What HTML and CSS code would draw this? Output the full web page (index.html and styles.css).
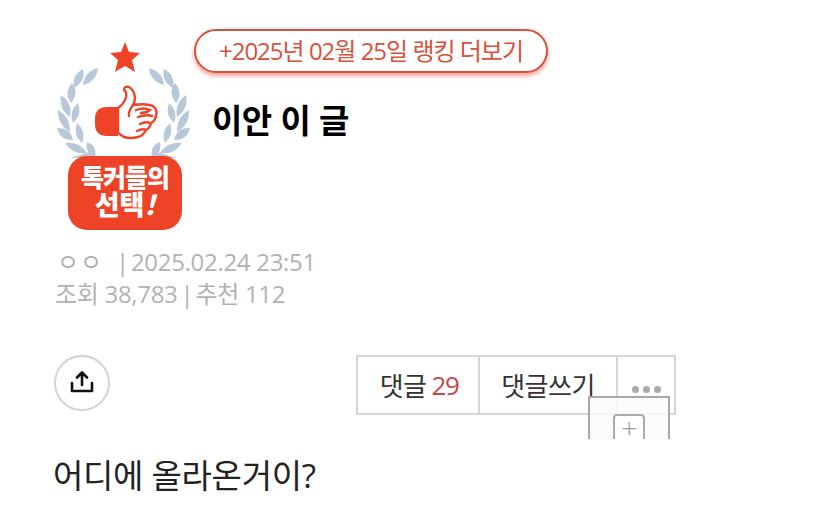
FILE: index.html
```html
<!DOCTYPE html>
<html lang="ko">
<head>
<meta charset="utf-8">
<title>이안 이 글</title>
<link rel="stylesheet" href="styles.css">
</head>
<body>
<main class="page">
  <a class="rank-pill">+2025년 02월 25일 랭킹 더보기</a>
  <header class="head">
    <svg class="badge" viewBox="50 36 146 200" width="146" height="200" aria-hidden="true">
      <polygon fill="#ee4327" points="125,42 129,52 140,53 132,60 135,72 125,66 115,72 118,60 110,53 121,52"/>
      <g id="laurel" fill="#b9c8d8">
        <path d="M98 68 Q96.4 81.7 83 85 Q84.6 71.3 98 68Z"/>
        <path d="M83 69 Q85.7 81.8 74 88 Q71.4 75.3 83 69Z"/>
        <path d="M72 83 Q79.5 93 71 103 Q63.5 93 72 83Z"/>
        <path d="M78 103 Q82.7 114.3 73 123 Q68.3 111.7 78 103Z"/>
        <path d="M61 95 Q72.7 103.4 70 117 Q58.3 108.6 61 95Z"/>
        <path d="M58 110 Q70.5 117.1 70 132 Q57.5 124.9 58 110Z"/>
        <path d="M77 123 Q86.7 131.7 82 143 Q72.3 134.3 77 123Z"/>
        <path d="M57 128 Q70.2 127.5 73 140 Q59.8 140.5 57 128Z"/>
        <path d="M65 143 Q79.25 140.85 87 153 Q72.75 155.15 65 143Z"/>
        <path d="M87 142 Q97.5 146.25 95 157 Q84.5 152.75 87 142Z"/>
        <path d="M70 158 L90 152 L100 158Z"/>
      </g>
      <use href="#laurel" transform="translate(247 0) scale(-1 1)"/>
      <path fill="#ee4327" d="M118 107 H107 Q95 107 95 119 V124 Q95 136 107 136 H118Z"/>
      <path fill="#fff" stroke="#ee4327" stroke-width="2.4" stroke-linejoin="round" d="M118 108 Q124 104 126 97 Q127 92 124 90 Q124 86 129 87 Q134 90 135 97 Q135 102 133 105 Q146 103 153 106 Q158 110 156 116 Q155 121 151 123 Q150 128 146 130 Q143 136 138 137 Q130 139 124 137 L118 133Z"/>
      <path fill="none" stroke="#ee4327" stroke-width="2.4" stroke-linecap="round" d="M133 105 Q128 112 129 116 M136 110 Q144 107 150 110 Q146 113 141 113 M138 117 Q146 114 152 116 M140 124 Q146 121 150 123 M137 131 Q142 128 146 130"/>
      <rect x="68" y="156" width="114" height="74" rx="19" fill="#ee4327"/>
      <text class="badge-text" x="125" y="187" text-anchor="middle">톡커들의</text>
      <text class="badge-text badge-text-big" x="125" y="215" text-anchor="middle">선택<tspan class="bang">!</tspan></text>
    </svg>
    <h1 class="title">이안 이 글</h1>
  </header>
  <section class="meta">
    <p class="meta-line"><span class="nick">ㅇㅇ</span><span class="pipe-date">|</span><span>2025.02.24 23:51</span></p>
    <p class="meta-line">조회 38,783<span class="pipe-count">|</span>추천 112</p>
  </section>
  <section class="actions">
    <button class="share" type="button" aria-label="공유">
      <svg viewBox="0 0 24 24" width="24" height="24" fill="none" stroke="#111" stroke-width="2.6" stroke-linecap="round" stroke-linejoin="round"><path d="M12 14V1.5M7 6.5 12 1.5 17 6.5M2 12V20H22V12"/></svg>
    </button>
    <div class="group">
      <span class="cell cell-count">댓글 <em>29</em></span>
      <span class="cell cell-write">댓글쓰기</span>
      <span class="cell cell-more"><i></i><i></i><i></i></span>
      <div class="popup"><span class="plus">+</span></div>
    </div>
  </section>
  <p class="body-text">어디에 올라온거이?</p>
</main>
</body>
</html>
```
FILE: styles.css
```css
* { box-sizing: border-box; }
html, body { margin: 0; padding: 0; background: #fff; height: 100%; overflow: hidden; }
body { font-family: "Open Sans", "Noto Sans CJK KR", sans-serif; }
.page { position: relative; padding: 36px 0 0 50px; width: 819px; height: 521px; overflow: hidden; }
.rank-pill {
  position: absolute; left: 194px; top: 29px; width: 354px; height: 44px;
  border: 2px solid #d9503c; border-radius: 22px; background: #fff;
  box-shadow: 0 3px 4px rgba(226, 90, 70, .55);
  color: #d9503c; font-size: 24px; letter-spacing: -1px; line-height: 40px; text-align: center; white-space: nowrap;
}
.head { display: flex; align-items: flex-start; height: 200px; }
.badge { display: block; flex: none; }
.badge-text { font-family: "Noto Sans CJK KR", sans-serif; font-weight: 900; font-size: 25px; fill: #fff; letter-spacing: -1px; }
.badge-text-big { font-size: 27px; letter-spacing: 0; }
.bang { font-style: italic; }
.title { margin: 60px 0 0 16px; font-family: "Noto Sans CJK KR", sans-serif; font-size: 33px; font-weight: 700; line-height: 46px; color: #000; letter-spacing: -.5px; }
.meta { margin: 10px 0 0 5px; color: #b2b2b2; font-size: 24px; }
.meta-line { margin: 0; height: 32px; line-height: 32px; white-space: nowrap; letter-spacing: -.3px; }
.nick { display: inline-block; width: 61px; padding-left: 2px; font-size: 24px; letter-spacing: 1px; }
.pipe-date { margin-right: 2px; }
.pipe-count { margin: 0 2px 0 3px; }
.actions { display: flex; align-items: flex-start; margin: 45px 0 0 4px; }
.share { width: 56px; height: 56px; border: 2px solid #d2d2d2; border-radius: 50%; background: #fff; padding: 0; display: flex; align-items: center; justify-content: center; }
.group { position: relative; display: flex; height: 60px; margin-left: 246px; border: 2px solid #d6d6d6; color: #333; font-size: 26px; letter-spacing: -.5px; }
.cell { display: flex; align-items: center; justify-content: center; gap: 5px; height: 100%; }
.cell em { font-style: normal; color: #c44a4a; letter-spacing: -1.5px; }
.cell-count { width: 122px; border-right: 2px solid #d6d6d6; padding-left: 2px; }
.cell-write { width: 138px; border-right: 2px solid #d6d6d6; }
.cell-more { width: 56px; gap: 4px; padding-top: 8px; }
.cell-more i { width: 7px; height: 7px; border-radius: 50%; background: #aaa; }
.popup { position: absolute; left: 230px; top: 39px; width: 82px; height: 43px; border: 2px solid #a8a8a8; border-bottom: 0; background: rgba(250, 250, 250, .85); overflow: hidden; }
.plus { display: block; width: 32px; height: 40px; margin: 16px 0 0 23px; border: 2px solid #aaa; border-radius: 4px; color: #999; font-size: 28px; font-weight: 300; line-height: 22px; text-align: center; background: #fff; }
.body-text { margin: 39px 0 0 3px; font-size: 33px; line-height: 44px; color: #222; letter-spacing: -.3px; }
```
